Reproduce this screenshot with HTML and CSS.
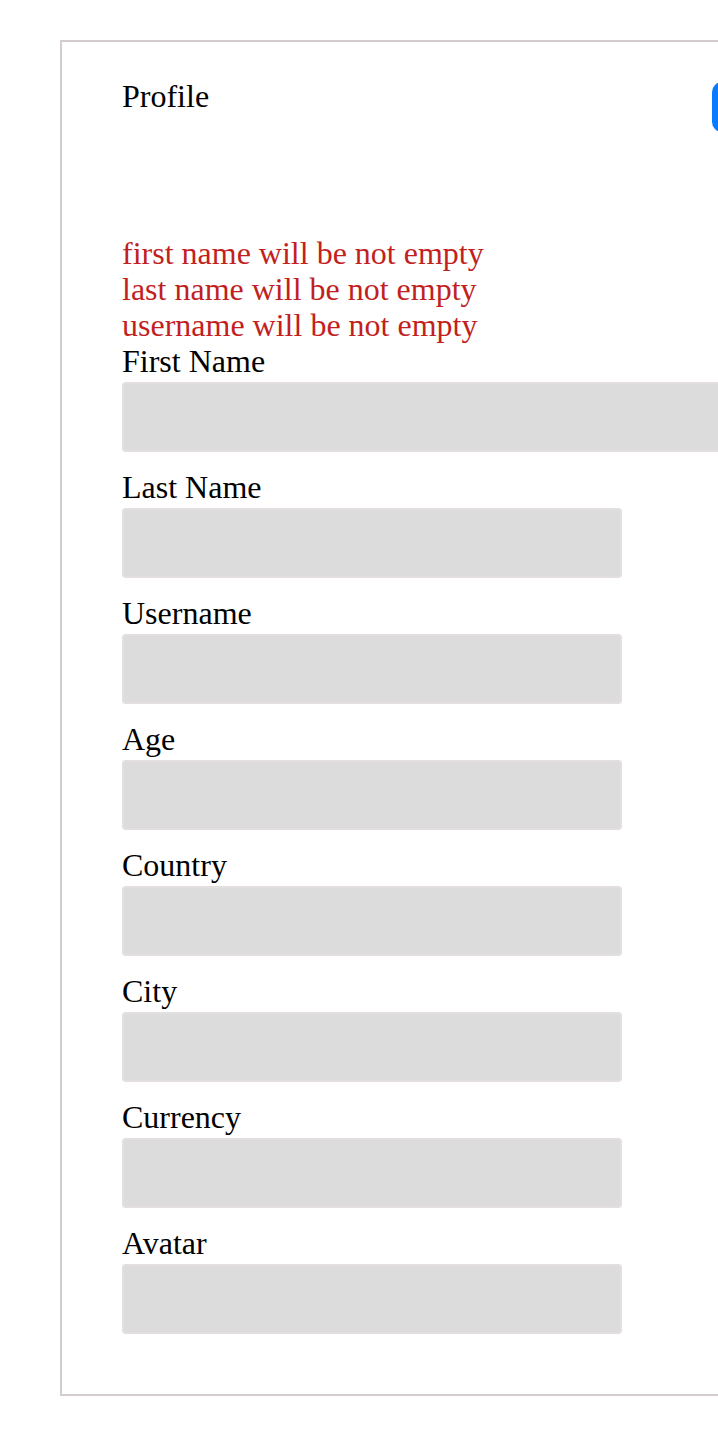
FILE: index.html
```html
<!DOCTYPE html>
<html lang="en">
<head>
<meta charset="utf-8">
<title>Profile</title>
<link rel="stylesheet" href="styles.css">
</head>
<body>
<div class="card">
  <div class="header">
    <div class="title">Profile</div>
    <button class="edit-btn" type="button"></button>
  </div>
  <div class="errors">
    <div class="error">first name will be not empty</div>
    <div class="error">last name will be not empty</div>
    <div class="error">username will be not empty</div>
  </div>
  <div class="field field-wide">
    <label class="label">First Name</label>
    <input class="input" type="text">
  </div>
  <div class="field">
    <label class="label">Last Name</label>
    <input class="input" type="text">
  </div>
  <div class="field">
    <label class="label">Username</label>
    <input class="input" type="text">
  </div>
  <div class="field">
    <label class="label">Age</label>
    <input class="input" type="text">
  </div>
  <div class="field">
    <label class="label">Country</label>
    <input class="input" type="text">
  </div>
  <div class="field">
    <label class="label">City</label>
    <input class="input" type="text">
  </div>
  <div class="field">
    <label class="label">Currency</label>
    <input class="input" type="text">
  </div>
  <div class="field">
    <label class="label">Avatar</label>
    <input class="input" type="text">
  </div>
</div>
</body>
</html>
```

FILE: styles.css
```css
html, body {
  margin: 0;
  padding: 0;
  overflow: hidden;
  background: #ffffff;
}

body {
  font-family: "Liberation Serif", "Times New Roman", serif;
  font-size: 32px;
  line-height: 36px;
  color: #000000;
  width: 718px;
}

.card {
  margin: 40px 0 40px 60px;
  width: 690px;
  padding: 36px 60px 60px 60px;
  border: 2px solid #d3cdce;
  display: flex;
  flex-direction: column;
}

.header {
  display: flex;
  justify-content: space-between;
  align-items: flex-start;
}

.title {
  line-height: 36px;
}

.edit-btn {
  width: 100px;
  height: 50px;
  margin-top: 4px;
  background: #0a7bff;
  border: none;
  border-radius: 10px;
  padding: 0;
}

.errors {
  margin-top: 106px;
  display: flex;
  flex-direction: column;
}

.error {
  color: #c21f1f;
  line-height: 30px;
  padding-bottom: 6px;
}

.field {
  display: flex;
  flex-direction: column;
  margin-bottom: 20px;
}

.field:last-child {
  margin-bottom: 0;
}

.label {
  line-height: 30px;
  padding-bottom: 6px;
}

.input {
  box-sizing: border-box;
  width: 500px;
  height: 70px;
  margin: 0;
  background: #dcdcdc;
  border: 2px solid #e3dedf;
  border-radius: 4px;
  font-family: inherit;
  font-size: 32px;
}

.field-wide .input {
  width: 100%;
}
```
